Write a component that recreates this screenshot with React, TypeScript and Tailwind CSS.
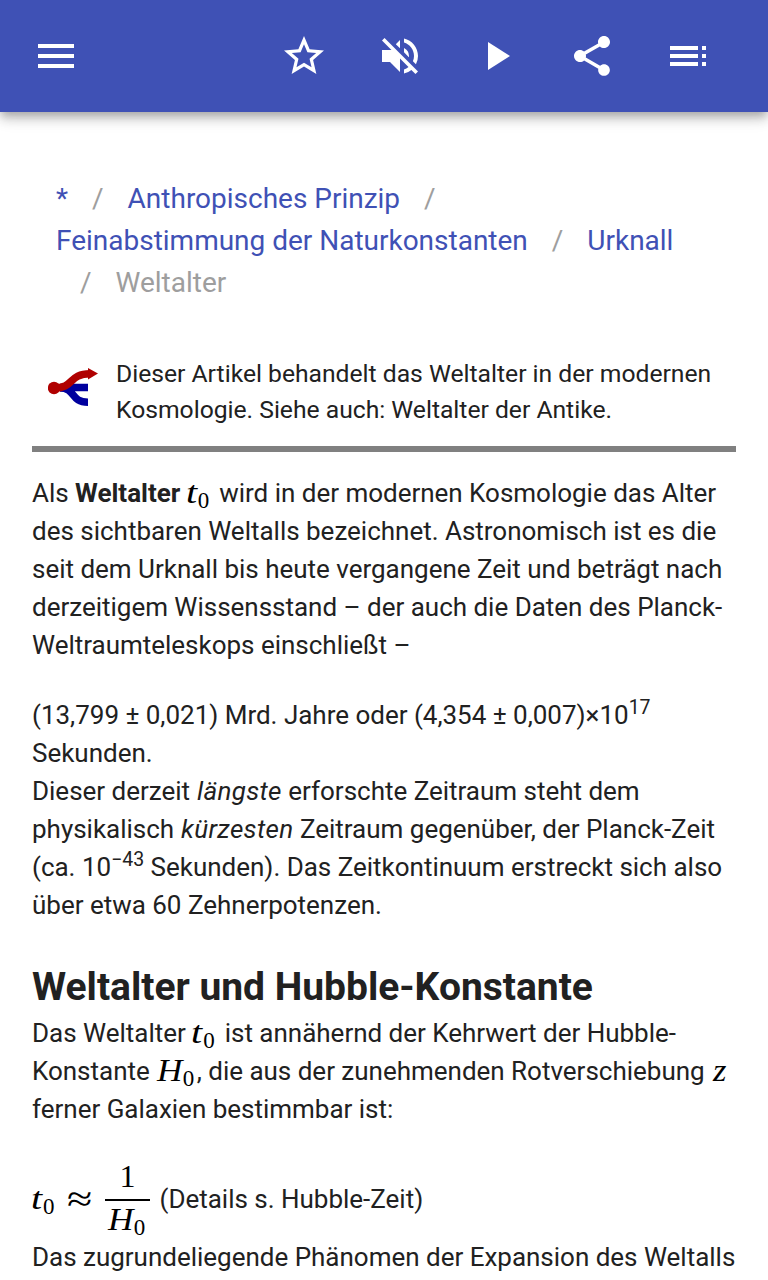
import React from "react";
import { clsx } from "clsx";
import { MdMenu, MdPlayArrow, MdShare, MdStarBorder, MdToc, MdVolumeOff } from "react-icons/md";

const actions = [
  { label: "Merken", Icon: MdStarBorder },
  { label: "Ton", Icon: MdVolumeOff },
  { label: "Abspielen", Icon: MdPlayArrow },
  { label: "Teilen", Icon: MdShare },
  { label: "Inhalt", Icon: MdToc },
];

function Header() {
  return (
    <header className="relative flex h-[112px] items-center justify-between bg-[#3f51b5] pr-8 pl-2 text-white shadow-[0px_4px_8px_-2px_rgba(0,0,0,0.2),0px_8px_10px_0px_rgba(0,0,0,0.14),0px_2px_20px_0px_rgba(0,0,0,0.12)]">
      <button aria-label="Menü" className="flex h-24 w-24 items-center justify-center">
        <MdMenu className="h-12 w-12" />
      </button>
      <div className="flex">
        {actions.map(({ label, Icon }) => (
          <button key={label} aria-label={label} className="flex h-24 w-24 items-center justify-center">
            <Icon className="h-12 w-12" />
          </button>
        ))}
      </div>
    </header>
  );
}

function Slash() {
  return <span className="mx-6 text-[#9e9e9e]">/</span>;
}

function Breadcrumbs() {
  return (
    <nav className="mt-[66px] px-6 text-[28px] leading-[42px] tracking-[-0.01px] whitespace-nowrap text-[#3f51b5]">
      <div>
        <a>*</a>
        <Slash />
        <a>Anthropisches Prinzip</a>
        <Slash />
      </div>
      <div>
        <a>Feinabstimmung der Naturkonstanten</a>
        <Slash />
        <a>Urknall</a>
      </div>
      <div>
        <Slash />
        <span className="text-[#9e9e9e]">Weltalter</span>
      </div>
    </nav>
  );
}

function BranchIcon() {
  return (
    <svg viewBox="0 0 50 40" className="h-10 w-[50px] shrink-0">
      <path d="M12 19.500H40M12 20C28 20 22 34.200 40 34.200" fill="none" stroke="#00009e" strokeWidth="7.500" />
      <path d="M6 20C27 20 20 5.800 42 5.800" fill="none" stroke="#b00000" strokeWidth="7.500" />
      <path d="M40 0L50 5.500L40 11.500Z" fill="#b00000" />
      <circle cx="6" cy="20" r="6.200" fill="#b00000" />
    </svg>
  );
}

// widths and stretch of the italic letters used in formulas
const glyphs: Record<string, string> = {
  t: "-ml-px w-[12px] scale-x-[1.25]",
  H: "ml-px w-[25.5px] scale-x-[1.1]",
  z: "ml-[1.5px] w-[13px] scale-x-[1.08]",
};

function Var({ name, sub, display }: { name: string; sub?: string; display?: boolean }) {
  return (
    <span
      className={clsx(
        "relative top-px inline-flex items-baseline font-['Liberation_Serif',serif] leading-none tracking-normal text-black",
        display ? "h-8" : "h-0"
      )}
    >
      <i className={clsx("origin-left text-[32px]", glyphs[name])}>{name}</i>
      {sub && <span className="relative top-[5px] -mr-[0.5px] text-[23px]">{sub}</span>}
    </span>
  );
}

export default function App() {
  return (
    <div className="h-[1280px] overflow-hidden bg-white font-[Roboto,sans-serif] text-[#212121]">
      <Header />
      <main className="px-8 text-[26px] leading-[38px] tracking-[-0.013px] whitespace-nowrap">
        <Breadcrumbs />

        <div className="mt-[52px] flex border-b-[6px] border-[#808080] pl-4 pb-[18px] text-[24.7px] leading-[36px]">
          <div className="mt-[12px] mr-[18px]">
            <BranchIcon />
          </div>
          <div>
            Dieser Artikel behandelt das Weltalter in der modernen
            <br />
            Kosmologie. Siehe auch: Weltalter der Antike.
          </div>
        </div>

        <p className="mt-[22px]">
          Als <b>Weltalter</b> <Var name="t" sub="0" />
          <span className="ml-[10.5px]">wird in der modernen Kosmologie das Alter</span>
          <br />
          des sichtbaren Weltalls bezeichnet. Astronomisch ist es die
          <br />
          seit dem Urknall bis heute vergangene Zeit und beträgt nach
          <br />
          derzeitigem Wissensstand – der auch die Daten des Planck-
          <br />
          Weltraumteleskops einschließt –
        </p>

        <p className="mt-8">
          (13,799 ± 0,021) Mrd. Jahre oder (4,354 ± 0,007)×10<sup className="text-[19.5px]">17</sup>
          <br />
          Sekunden.
          <br />
          Dieser derzeit <i className="ml-[0.5px] tracking-[0.32px]">längste</i> erforschte Zeitraum steht dem
          <br />
          physikalisch <i className="ml-[0.5px] tracking-[0.33px]">kürzesten</i> Zeitraum gegenüber, der Planck-Zeit
          <br />
          (ca. 10<sup className="text-[19.5px]">−43</sup> Sekunden). Das Zeitkontinuum erstreckt sich also
          <br />
          über etwa 60 Zehnerpotenzen.
        </p>

        <h2 className="mt-[40px] text-[39px] leading-[46px] font-bold">Weltalter und Hubble-Konstante</h2>
        <p className="mt-[4px]">
          Das Weltalter <Var name="t" sub="0" />
          <span className="ml-[10.5px]">ist annähernd der Kehrwert der Hubble-</span>
          <br />
          Konstante <Var name="H" sub="0" />
          <span className="ml-[3px]">, die aus der zunehmenden Rotverschiebung</span> <Var name="z" />
          <br />
          ferner Galaxien bestimmbar ist:
        </p>

        <div className="mt-8 flex h-[78px] items-center">
          <div className="mb-[4px] flex">
            <Var name="t" sub="0" display />
          </div>
          <span className="ml-[13px] w-[26px] origin-left scale-x-[1.28] font-['Liberation_Serif',serif] text-[36px] text-black">≈</span>
          <div className="ml-3 flex h-full w-[45px] flex-col items-center leading-none text-black">
            <span className="h-[39px] font-['Liberation_Serif',serif] text-[32px]">1</span>
            <span className="h-[2px] w-full bg-black" />
            <span className="flex h-[37px] items-start pt-px pr-[3px]">
              <Var name="H" sub="0" display />
            </span>
          </div>
          <span className="ml-[9.5px]">(Details s. Hubble-Zeit)</span>
        </div>
        <p>Das zugrundeliegende Phänomen der Expansion des Weltalls</p>
      </main>
    </div>
  );
}
